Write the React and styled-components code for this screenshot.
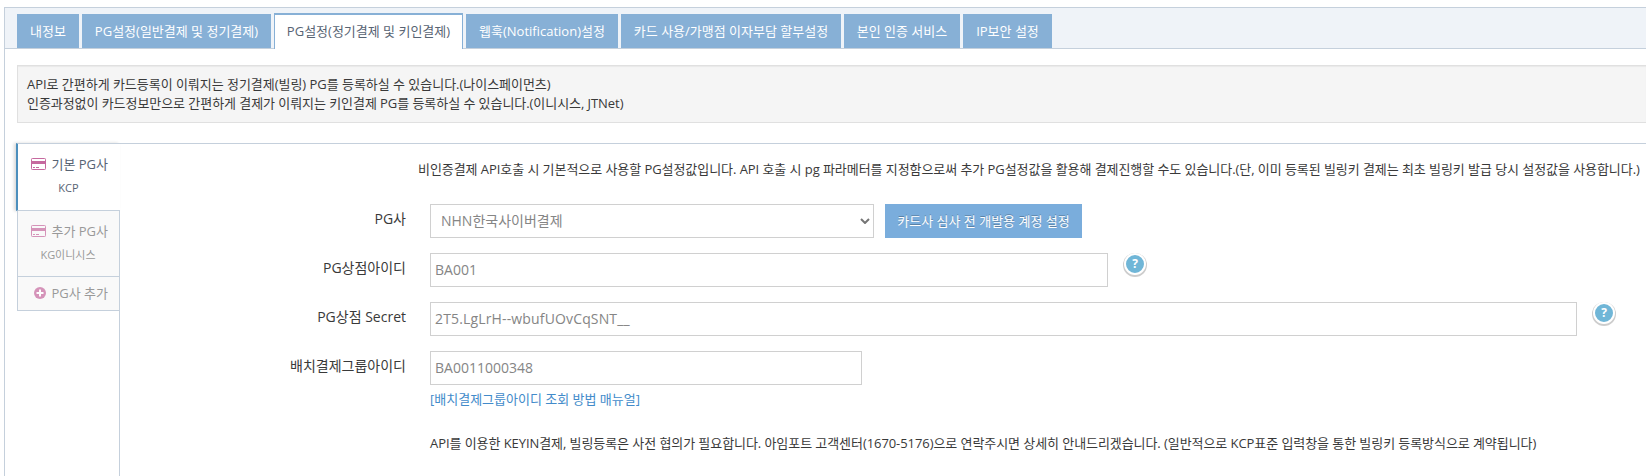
import React from "react";
import styled, { createGlobalStyle, css } from "styled-components";

const GlobalStyle = createGlobalStyle`
  * { box-sizing: border-box; }
  body {
    margin: 0;
    background: #fff;
    color: #393939;
    font: 13px/20px "Open Sans", "Noto Sans CJK KR", sans-serif;
    overflow: hidden;
  }
`;

const Page = styled.div`
  width: 1646px;
  height: 476px;
  padding: 7px 0 0 4px;
  overflow: hidden;
  white-space: nowrap;
`;

const Panel = styled.main`
  height: 469px;
  border: 1px solid #c5d0dc;
  border-width: 1px 0 0 1px;
`;

const TabBar = styled.nav`
  display: flex;
  align-items: flex-end;
  height: 41px;
  padding-left: 12px;
  background: #eff3f8;
  border-bottom: 1px solid #c5d0dc;
`;

const Tab = styled.a`
  width: ${(p) => p.$width}px;
  height: 34px;
  margin-right: 3px;
  color: #fff;
  background: #87b0d6;
  line-height: 35px;
  text-align: center;
  ${(p) =>
    p.$active &&
    css`
      height: 36px;
      margin-bottom: -1px;
      color: #576373;
      background: #fff;
      border: 1px solid #87b0d6;
      border-width: 2px 1px 0;
      line-height: 33px;
    `}
`;

const Body = styled.div`
  padding: 16px 0 0 12px;
`;

const Well = styled.div`
  margin: 0 0 20px;
  height: 58px;
  padding: 9px 9px;
  line-height: 19px;
  background: #f5f5f5;
  border: 1px solid #e0e0e0;
  border-right: 0;
  box-shadow: inset 0 1px 1px rgba(0, 0, 0, 0.05);
`;

const WellLine = styled.p`
  margin: 0;
  letter-spacing: ${(p) => p.$tracking}px;
`;

const Columns = styled.div`
  display: flex;
  align-items: flex-start;
  margin-left: -1px;
`;

const SideTabs = styled.div`
  position: relative;
  z-index: 1;
  flex: none;
  width: 104px;
  margin-right: -1px;
  padding-left: 1px;
`;

const SideTab = styled.div`
  height: ${(p) => p.$height}px;
  padding-top: ${(p) => p.$top}px;
  text-align: center;
  color: #999;
  background: #f9f9f9;
  border: 1px solid #c5d0dc;
  border-top: 0;
  svg { opacity: 0.7; }
  ${(p) =>
    p.$active &&
    css`
      margin-left: -1px;
      color: #576373;
      background: #fff;
      border-left: 2px solid #4c8fbd;
      border-right: 0;
      border-top: 1px solid #c5d0dc;
      box-shadow: -2px 0 3px rgba(0, 0, 0, 0.15);
      svg { opacity: 1; }
    `}
`;

const SideTitle = styled.div`
  display: flex;
  align-items: center;
  justify-content: flex-end;
  gap: 5px;
  height: 20px;
  padding-right: ${(p) => (p.$active ? 12 : 11)}px;
`;

const SideName = styled.div`
  font-size: 11px;
  line-height: 20px;
  margin-top: 4px;
  padding-right: 1px;
`;

const Content = styled.section`
  flex: 1;
  min-width: 0;
  height: 340px;
  border: 1px solid #c5d0dc;
  border-width: 1px 0 0 1px;
  padding-top: 15px;
`;

const Notice = styled.p`
  margin: 0 0 25px 298px;
  letter-spacing: -0.062px;
`;

const Row = styled.div`
  display: flex;
  align-items: flex-start;
  height: 34px;
  margin-bottom: 15px;
`;

const Label = styled.label`
  width: 286px;
  margin-right: 24px;
  text-align: right;
  font-size: 14px;
  line-height: 30px;
`;

const Field = styled.input`
  width: ${(p) => p.$width}px;
  height: 34px;
  padding: 0 4px 2px;
  color: #858585;
  background: #fff;
  border: 1px solid #d0d0d0;
  border-radius: 0;
  font: 14px "Open Sans", "Noto Sans CJK KR", sans-serif;
  letter-spacing: ${(p) => p.$tracking || 0}px;
`;

const Select = styled.div`
  display: flex;
  align-items: center;
  justify-content: space-between;
  width: 444px;
  height: 34px;
  padding: 0 3px 0 10px;
  color: #858585;
  border: 1px solid #d0d0d0;
  font-size: 14px;
`;

const Button = styled.button`
  width: 197px;
  height: 34px;
  margin-left: 11px;
  padding: 0 0 1px;
  color: #fff;
  background: #7aaddc;
  border: 0;
  font: 13px "Open Sans", "Noto Sans CJK KR", sans-serif;
  text-shadow: 0 -1px 0 rgba(0, 0, 0, 0.25);
`;

const Help = styled.span`
  width: 22px;
  height: 22px;
  margin: 0 0 0 16px;
  color: #fff;
  background: #70b6d7;
  border: 2px solid #fff;
  border-radius: 50%;
  box-shadow: 0 1px 0 1px rgba(0, 0, 0, 0.2);
  font-size: 12px;
  font-weight: 700;
  line-height: 18px;
  text-align: center;
`;

const Manual = styled.a`
  display: block;
  margin: -11px 0 24px 310px;
  color: #428bca;
`;

const Footnote = styled.p`
  margin: 0 0 0 310px;
  letter-spacing: -0.07px;
`;

const CardIcon = () => (
  <svg width="15" height="12" viewBox="0 0 15 12" fill="none">
    <rect x="0.5" y="0.5" width="14" height="11" rx="0.8" stroke="#c6699f" />
    <path d="M1 3h13v3H1zM2 9h2v1H2zM5 9h3v1H5z" fill="#c6699f" />
  </svg>
);

const PlusIcon = () => (
  <svg width="12" height="12" viewBox="0 0 12 12">
    <circle cx="6" cy="6" r="6" fill="#c6699f" />
    <path d="M5 2.5h2V5h2.5v2H7v2.5H5V7H2.5V5H5z" fill="#fff" />
  </svg>
);

const Chevron = () => (
  <svg width="10" height="6" viewBox="0 0 10 6" fill="none">
    <path d="M1 1l4 4 4-4" stroke="#757575" strokeWidth="2" />
  </svg>
);

const tabs = [
  ["내정보", 62],
  ["PG설정(일반결제 및 정기결제)", 189],
  ["PG설정(정기결제 및 키인결제)", 189, true],
  ["웹훅(Notification)설정", 152],
  ["카드 사용/가맹점 이자부담 할부설정", 220],
  ["본인 인증 서비스", 116],
  ["IP보안 설정", 89],
];

export default function App() {
  return (
    <Page>
      <GlobalStyle />
      <Panel>
        <TabBar>
          {tabs.map(([text, width, active]) => (
            <Tab key={text} $width={width} $active={active}>{text}</Tab>
          ))}
        </TabBar>
        <Body>
          <Well>
            <WellLine $tracking={-0.03}>
              API로 간편하게 카드등록이 이뤄지는 정기결제(빌링) PG를 등록하실 수 있습니다.(나이스페이먼츠)
            </WellLine>
            <WellLine $tracking={-0.06}>
              인증과정없이 카드정보만으로 간편하게 결제가 이뤄지는 키인결제 PG를 등록하실 수 있습니다.(이니시스, JTNet)
            </WellLine>
          </Well>
          <Columns>
            <SideTabs>
              <SideTab $active $height={68} $top={10}>
                <SideTitle $active><CardIcon />기본 PG사</SideTitle>
                <SideName>KCP</SideName>
              </SideTab>
              <SideTab $height={66} $top={10}>
                <SideTitle><CardIcon />추가 PG사</SideTitle>
                <SideName>KG이니시스</SideName>
              </SideTab>
              <SideTab $height={34} $top={6}>
                <SideTitle><PlusIcon />PG사 추가</SideTitle>
              </SideTab>
            </SideTabs>
            <Content>
              <Notice>
                비인증결제 API호출 시 기본적으로 사용할 PG설정값입니다. API 호출 시 pg 파라메터를 지정함으로써 추가 PG설정값을 활용해 결제진행할 수도 있습니다.(단, 이미 등록된 빌링키 결제는 최초 빌링키 발급 당시 설정값을 사용합니다.)
              </Notice>
              <Row>
                <Label>PG사</Label>
                <Select>NHN한국사이버결제<Chevron /></Select>
                <Button>카드사 심사 전 개발용 계정 설정</Button>
              </Row>
              <Row>
                <Label>PG상점아이디</Label>
                <Field $width={678} defaultValue="BA001" />
                <Help>?</Help>
              </Row>
              <Row>
                <Label>PG상점 Secret</Label>
                <Field $width={1147} $tracking={0.15} defaultValue="2T5.LgLrH--wbufUOvCqSNT__" />
                <Help>?</Help>
              </Row>
              <Row>
                <Label>배치결제그룹아이디</Label>
                <Field $width={432} defaultValue="BA0011000348" />
              </Row>
              <Manual>[배치결제그룹아이디 조회 방법 매뉴얼]</Manual>
              <Footnote>
                API를 이용한 KEYIN결제, 빌링등록은 사전 협의가 필요합니다. 아임포트 고객센터(1670-5176)으로 연락주시면 상세히 안내드리겠습니다. (일반적으로 KCP표준 입력창을 통한 빌링키 등록방식으로 계약됩니다)
              </Footnote>
            </Content>
          </Columns>
        </Body>
      </Panel>
    </Page>
  );
}
